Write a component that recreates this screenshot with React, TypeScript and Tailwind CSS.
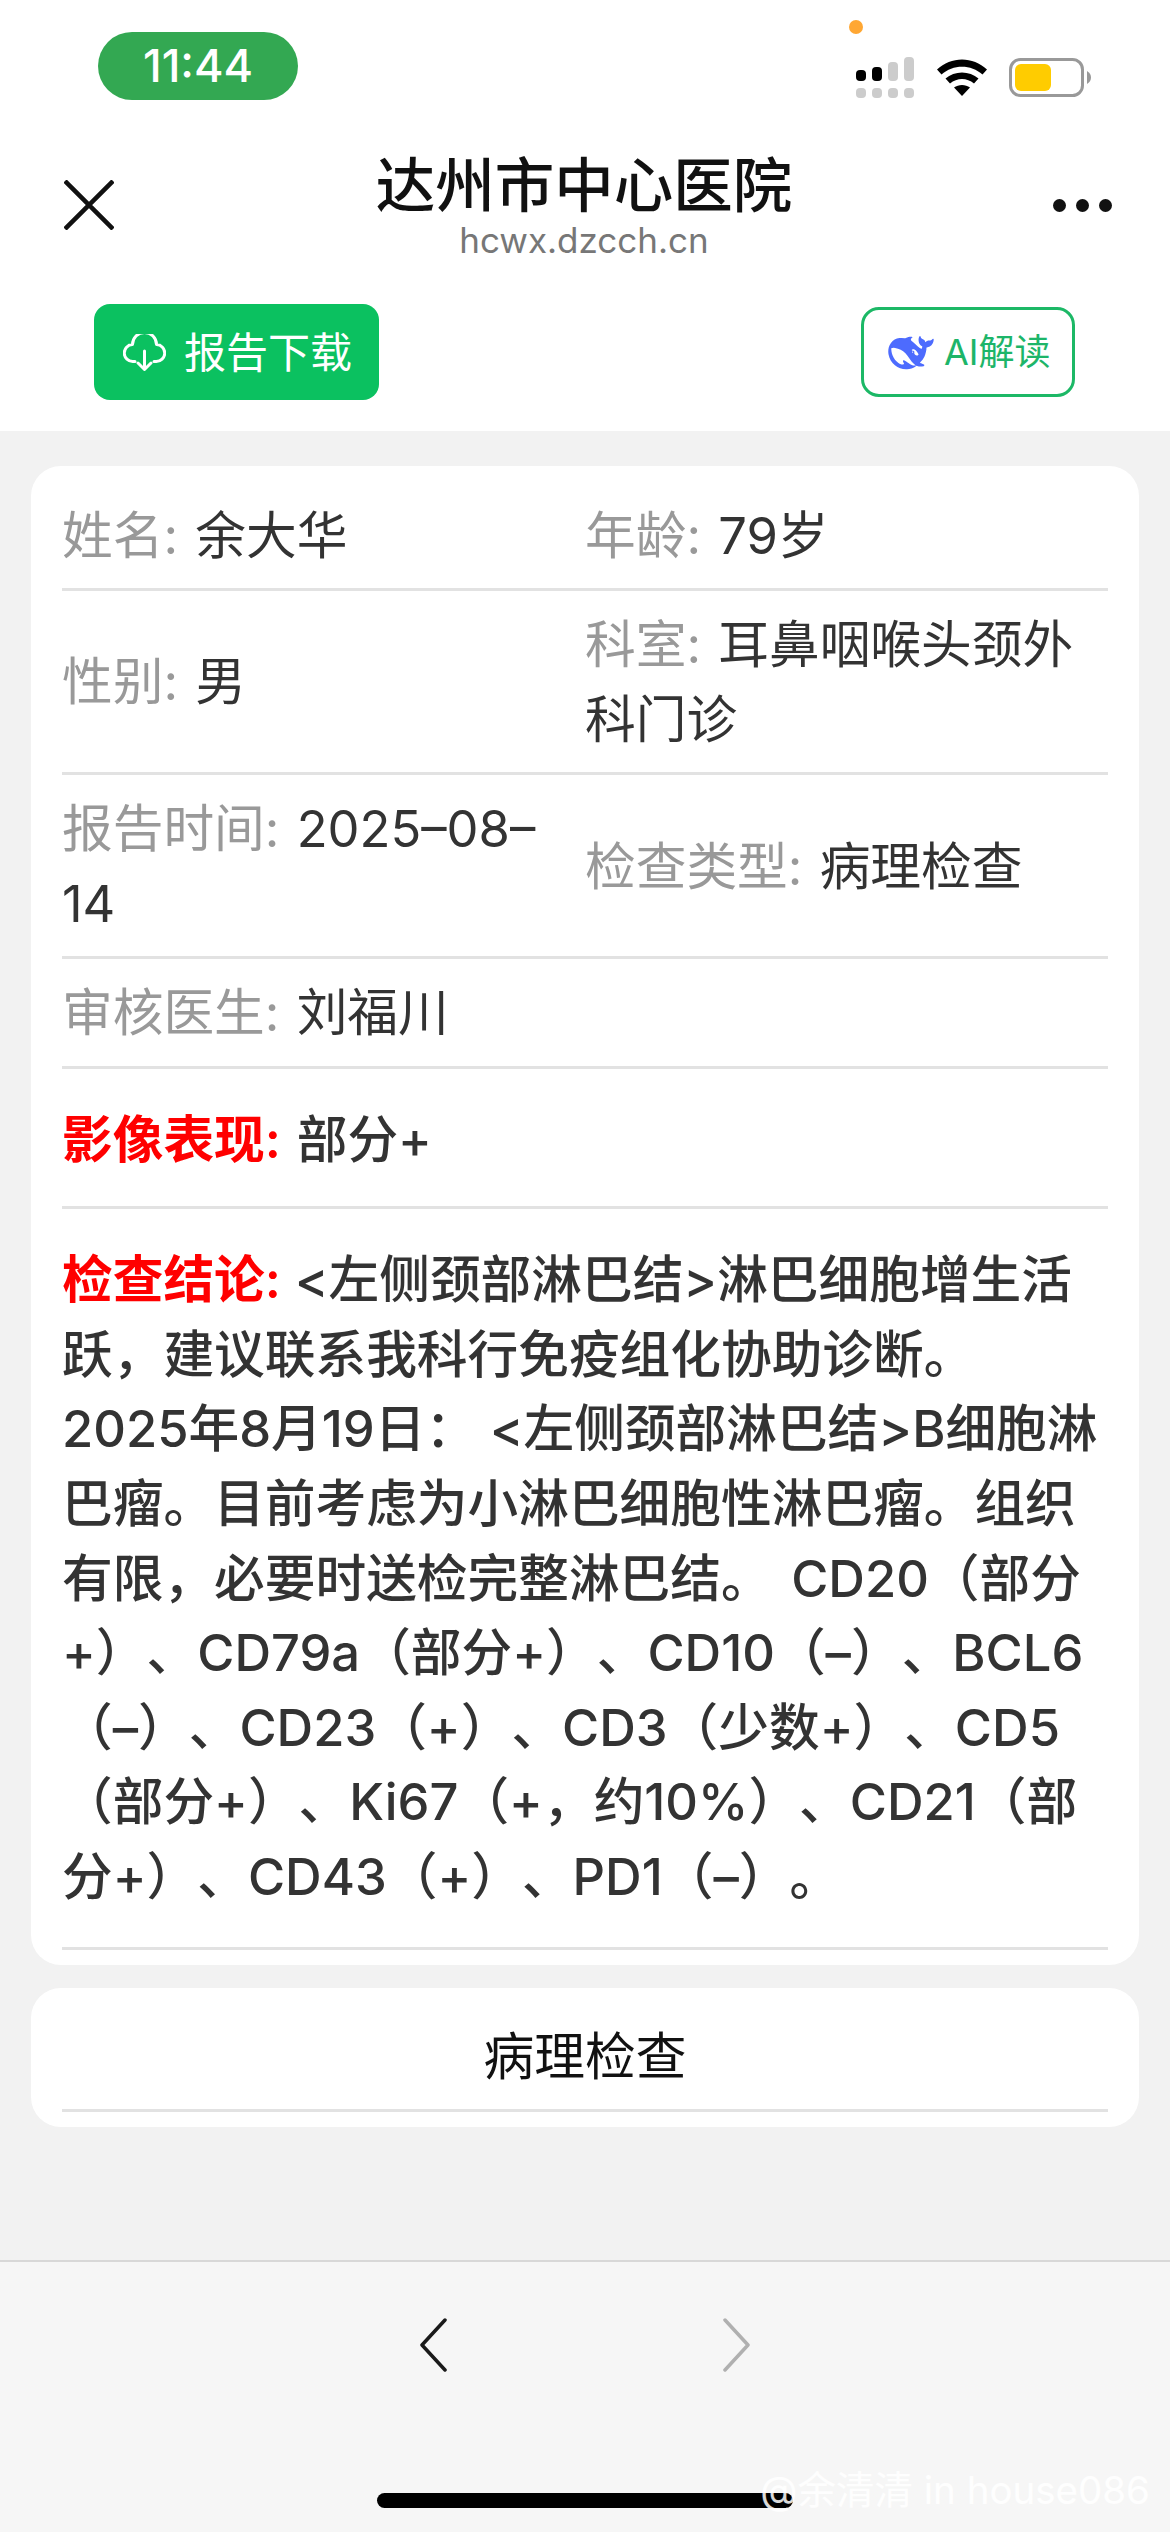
const font = "font-['Inter','Noto_Sans_CJK_SC',sans-serif]";

function StatusIcons() {
  return (
    <svg width="235" height="41" viewBox="856 57 235 41" className="mt-[57px]">
      {/* signal */}
      <rect x="856" y="70" width="10" height="11" rx="4" fill="#000" />
      <rect x="872" y="67" width="10" height="14" rx="4" fill="#000" />
      <rect x="888" y="62" width="10" height="19" rx="4" fill="#ccc" />
      <rect x="904" y="57" width="10" height="24" rx="4" fill="#ccc" />
      <rect x="856" y="88" width="10" height="10" rx="4" fill="#ccc" />
      <rect x="872" y="88" width="10" height="10" rx="4" fill="#ccc" />
      <rect x="888" y="88" width="10" height="10" rx="4" fill="#ccc" />
      <rect x="904" y="88" width="10" height="10" rx="4" fill="#ccc" />
      {/* wifi */}
      <path d="M937 69.5C951 56 973 56 987 69.5L982.5 74.5C971 64 953 64 941.5 74.5Z" fill="#000" />
      <path d="M945.5 78.5C954.5 70.5 969.5 70.5 978.5 78.5L974 83.5C967 77.5 957 77.5 950 83.5Z" fill="#000" />
      <path d="M954 87.5C958.500 84 965.500 84 970 87.500L962 96Z" fill="#000" />
      {/* battery */}
      <rect x="1010.500" y="59.500" width="72" height="36" rx="10" fill="#fff" stroke="#999" strokeWidth="3" />
      <rect x="1015" y="64" width="36" height="27" rx="6" fill="#ffcc00" />
      <path d="M1087 71C1090 73 1091 75 1091 77.500C1091 80 1090 82 1087 84Z" fill="#999" />
    </svg>
  );
}

function Whale() {
  return (
    <svg width="46" height="36" viewBox="0 2 24 19" fill="#4d6bfe">
      <path d="M23.748 4.482c-.254-.124-.364.113-.512.234-.051.039-.094.09-.137.136-.372.397-.806.657-1.373.626-.829-.046-1.537.214-2.163.848-.133-.782-.575-1.248-1.247-1.548-.352-.156-.708-.311-.955-.65-.172-.241-.219-.51-.305-.774-.055-.16-.11-.323-.293-.35-.2-.031-.278.136-.356.276-.313.572-.434 1.202-.422 1.84.027 1.436.633 2.58 1.838 3.393.137.093.172.187.129.323-.082.28-.18.552-.266.833-.055.179-.137.217-.329.14a5.526 5.526 0 01-1.736-1.18c-.857-.828-1.631-1.742-2.597-2.458a11.365 11.365 0 00-.689-.471c-.985-.957.13-1.743.388-1.836.27-.098.093-.432-.779-.428-.872.004-1.67.295-2.687.684a3.055 3.055 0 01-.465.137 9.597 9.597 0 00-2.883-.102c-1.885.21-3.39 1.102-4.497 2.623C.082 8.606-.231 10.684.152 12.85c.403 2.284 1.569 4.175 3.36 5.653 1.858 1.533 3.997 2.284 6.438 2.14 1.482-.085 3.133-.284 4.994-1.86.47.234.962.327 1.78.397.63.059 1.236-.03 1.705-.128.735-.156.684-.837.419-.961-2.155-1.004-1.682-.595-2.113-.926 1.096-1.296 2.746-2.642 3.392-7.003.05-.347.007-.565 0-.845-.004-.17.035-.237.23-.256a4.173 4.173 0 001.545-.475c1.396-.763 1.96-2.015 2.093-3.517.02-.23-.004-.467-.247-.588zM11.581 18c-2.089-1.642-3.102-2.183-3.52-2.16-.392.024-.321.471-.235.763.09.288.207.486.371.739.114.167.192.416-.113.603-.673.416-1.842-.14-1.897-.167-1.361-.802-2.5-1.86-3.301-3.307-.774-1.393-1.224-2.887-1.298-4.482-.02-.386.093-.522.477-.592a4.696 4.696 0 011.529-.039c2.132.312 3.946 1.265 5.468 2.774.868.86 1.525 1.887 2.202 2.891.72 1.066 1.494 2.082 2.48 2.914.348.292.625.514.891.677-.802.09-2.14.11-3.054-.614zm1-6.44a.306.306 0 01.415-.287.302.302 0 01.2.288.306.306 0 01-.31.307.303.303 0 01-.304-.308zm3.11 1.596c-.2.081-.399.151-.59.16a1.245 1.245 0 01-.798-.254c-.274-.23-.47-.358-.552-.758a1.73 1.73 0 01.016-.588c.07-.327-.008-.537-.239-.727-.187-.156-.426-.199-.688-.199a.559.559 0 01-.254-.078c-.11-.054-.2-.19-.114-.358.028-.054.16-.186.192-.21.356-.202.767-.136 1.146.016.352.144.618.408 1.001.782.391.451.462.576.685.914.176.265.336.537.445.848.067.195-.019.354-.25.452z" />
    </svg>
  );
}

function Field({ label, children }: { label: string; children: React.ReactNode }) {
  return (
    <div className="w-1/2 pr-[30px] last:pr-0">
      <span className="mr-[3px] text-[#999]">{label}: </span>
      <span className="text-[#333]">{children}</span>
    </div>
  );
}

function Row({ children }: { children: React.ReactNode }) {
  return <div className="flex items-center border-b-[3px] border-[#e2e2e2] pb-[14.500px] pt-[17.500px]">{children}</div>;
}

export default function App() {
  return (
    <div className={`${font} relative flex h-[2532px] w-[1170px] flex-col overflow-hidden bg-[#f2f2f2] [text-autospace:no-autospace] [text-spacing-trim:space-all]`}>
      <header className="h-[431px] bg-white">
        <div className="relative flex h-[150px] items-start justify-between pl-[98px] pr-[79px]">
          <div className="mt-[32px] flex h-[68px] w-[200px] items-center justify-center rounded-[34px] bg-[#33a852] text-[45px] font-medium text-white">11:44</div>
          <span className="absolute left-[849px] top-[20px] h-[14px] w-[14px] rounded-full bg-[#ffa733]" />
          <StatusIcons />
        </div>

        <div className="grid h-[110px] grid-cols-[1fr_auto_1fr] items-center pl-[64px] pr-[58px]">
          <svg width="50" height="50" viewBox="0 0 50 50" fill="none" stroke="#111" strokeWidth="4.500">
            <path d="M1 1L49 49M49 1L1 49" />
          </svg>
          <div className="pr-[8px] text-center">
            <div className="h-[70px] text-[59.500px] font-medium leading-[70px] text-[#111]">达州市中心医院</div>
            <div className="h-[40px] text-[35px] leading-[40px] text-[#777]">hcwx.dzcch.cn</div>
          </div>
          <div className="flex justify-end gap-[10px]">
            <span className="h-[13px] w-[13px] rounded-full bg-[#111]" />
            <span className="h-[13px] w-[13px] rounded-full bg-[#111]" />
            <span className="h-[13px] w-[13px] rounded-full bg-[#111]" />
          </div>
        </div>

        <div className="mt-[44px] flex h-[96px] items-center justify-between pl-[94px] pr-[95px]">
          <div className="flex h-[96px] w-[285px] items-center gap-[18px] rounded-[16px] bg-[#0bc160] pl-[29px] text-[42px] text-white">
            <svg width="43" height="37" viewBox="0 0 43 37" fill="none" stroke="#fff" strokeWidth="3" strokeLinecap="round" strokeLinejoin="round">
              <path d="M12 27.500H10a8.500 8.500 0 0 1-.5-17A12 12 0 0 1 33.500 10.500a8.500 8.500 0 0 1-.5 17H31" />
              <path d="M21.500 17V35M15 29l6.500 6.500L28 29" />
            </svg>
            报告下载
          </div>
          <div className="flex h-[90px] w-[214px] items-center gap-[10px] rounded-[18px] border-[3px] border-[#1cb866] pl-[24px] text-[36px] text-[#1db569]">
            <Whale />
            AI解读
          </div>
        </div>
      </header>

      <main className="px-[31px] pt-[35px] text-[50.700px] leading-[74.600px]">
        <section className="rounded-[30px] bg-white px-[31px] pb-[15px] pt-[15px]">
          <Row>
            <Field label="姓名">余大华</Field>
            <Field label="年龄">79岁</Field>
          </Row>
          <Row>
            <Field label="性别">男</Field>
            <Field label="科室">耳鼻咽喉头颈外科门诊</Field>
          </Row>
          <Row>
            <Field label="报告时间">2025–08–14</Field>
            <Field label="检查类型">病理检查</Field>
          </Row>
          <Row>
            <Field label="审核医生">刘福川</Field>
          </Row>
          <div className="border-b-[3px] border-[#e2e2e2] pb-[29px] pt-[34px] font-medium text-[#333]">
            <span className="mr-[3px] font-semibold text-[#f00]">影像表现: </span>部分+
          </div>
          <div className="whitespace-nowrap border-b-[3px] border-[#e2e2e2] pb-[32px] pt-[34px] font-medium text-[#333]">
            <span className="mr-[1px] font-semibold text-[#f00]">检查结论: </span>
            &lt;左侧颈部淋巴结&gt;淋巴细胞增生活<br />
            跃，建议联系我科行免疫组化协助诊断。<br />
            2025年8月19日： &lt;左侧颈部淋巴结&gt;B细胞淋<br />
            巴瘤。目前考虑为小淋巴细胞性淋巴瘤。组织<br />
            有限，必要时送检完整淋巴结。 <span className="ml-[6px]">CD20（部分</span><br />
            +）、CD79a（部分+）、CD10（–）、BCL6<br />
            （–）、CD23（+）、CD3（少数+）、CD5<br />
            （部分+）、Ki67（+，约10%）、CD21（部<br />
            分+）、CD43（+）、PD1（–）。
          </div>
        </section>

        <section className="mt-[23px] rounded-[30px] bg-white px-[31px] pb-[15px] pt-[15px]">
          <div className="border-b-[3px] border-[#e2e2e2] pb-[14.500px] pt-[17.500px] text-center text-[#111]">病理检查</div>
        </section>
      </main>

      <footer className="mt-auto flex h-[272px] flex-col items-center border-t-2 border-[#d8d8d8] bg-[#f6f6f6] pt-[56px]">
        <div className="flex h-[54px] items-center gap-[272px]">
          <svg width="30" height="54" viewBox="0 0 30 54" fill="none" stroke="#1a1a1a" strokeWidth="3.500" strokeLinecap="round" strokeLinejoin="round">
            <path d="M26 2L3 27L26 52" />
          </svg>
          <svg width="30" height="54" viewBox="0 0 30 54" fill="none" stroke="#b0b0b0" strokeWidth="3.500" strokeLinecap="round" strokeLinejoin="round">
            <path d="M4 2L27 27L4 52" />
          </svg>
        </div>
        <div className="mt-[121px] h-[15px] w-[416px] rounded-full bg-black" />
      </footer>

      <div className="absolute bottom-[23px] right-[20px] text-[38.500px] leading-[38px] text-white/85">@余清清 in house086</div>
    </div>
  );
}
